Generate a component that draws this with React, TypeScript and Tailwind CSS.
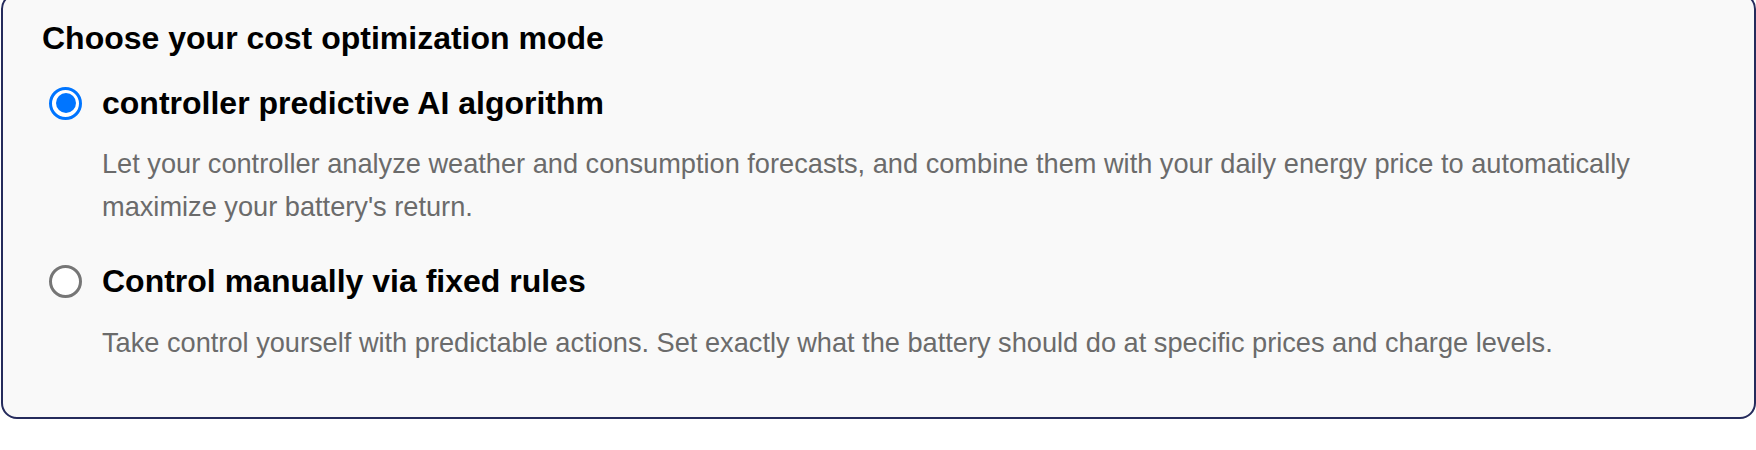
import React from 'react'

interface ModeOption {
  id: string
  label: string
  description: string
}

const options: ModeOption[] = [
  {
    id: 'ai',
    label: 'controller predictive AI algorithm',
    description:
      "Let your controller analyze weather and consumption forecasts, and combine them with your daily energy price to automatically maximize your battery's return.",
  },
  {
    id: 'manual',
    label: 'Control manually via fixed rules',
    description:
      'Take control yourself with predictable actions. Set exactly what the battery should do at specific prices and charge levels.',
  },
]

function Radio({ checked }: { checked: boolean }) {
  if (checked) {
    return (
      <span className="w-[33px] h-[33px] shrink-0 rounded-full border-[3px] border-[#0075ff] bg-white flex items-center justify-center">
        <span className="w-[20px] h-[20px] rounded-full bg-[#0075ff]" />
      </span>
    )
  }
  return <span className="w-[33px] h-[33px] shrink-0 rounded-full border-[3px] border-[#767676] bg-white" />
}

export default function App() {
  const [mode, setMode] = React.useState('ai')

  return (
    <div className="w-full h-[450px] bg-white overflow-hidden" style={{ fontFamily: '"Liberation Sans", Arial, sans-serif' }}>
      <div className="ml-px mt-[-7px] h-[426px] border-2 border-[#252b5c] rounded-[16px] bg-[#f9f9f9] pl-[39px] pr-[40px] pt-[24px]">
        <h2 className="text-[32px] leading-[38px] font-bold text-black">Choose your cost optimization mode</h2>

        {options.map((opt, i) => (
          <div key={opt.id} className={i === 0 ? 'mt-[27px]' : 'mt-[34px]'}>
            <label className="flex items-center cursor-pointer" onClick={() => setMode(opt.id)}>
              <span className="ml-[7px] mr-[20px] flex">
                <Radio checked={mode === opt.id} />
              </span>
              <span className="text-[32px] leading-[38px] font-bold text-black">{opt.label}</span>
            </label>
            <p className={(i === 0 ? 'mt-[21px]' : 'mt-[22px]') + ' ml-[60px] text-[27.2px] leading-[42.5px] text-[#6b6b6b]'}>
              {opt.description}
            </p>
          </div>
        ))}
      </div>
    </div>
  )
}
